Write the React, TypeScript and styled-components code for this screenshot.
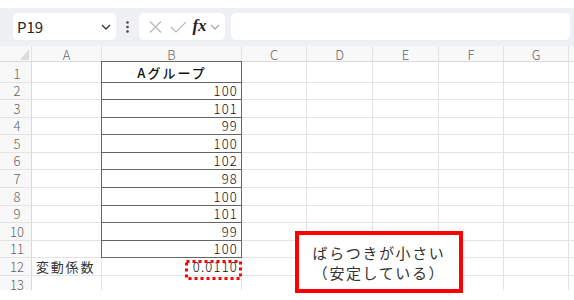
import React from "react";
import styled, { createGlobalStyle, css } from "styled-components";

const Global = createGlobalStyle`
  html, body { margin: 0; padding: 0; background: #ffffff; }
  body { font-family: "Noto Sans CJK JP", "Noto Sans", sans-serif; }
`;

const FONT = `"Noto Sans CJK JP", "Noto Sans", sans-serif`;

const Page = styled.div`
  width: 574px;
  height: 300px;
  overflow: hidden;
  background: #ffffff;
  padding-top: 8px;
  box-sizing: border-box;
`;

const Toolbar = styled.div`
  height: 38px;
  background: #eef0f3;
  display: flex;
  align-items: flex-start;
  padding: 5px 4px 0 13px;
  box-sizing: border-box;
`;

const NameBox = styled.div`
  width: 103px;
  height: 27px;
  background: #ffffff;
  border-radius: 5px;
  display: flex;
  align-items: center;
  justify-content: space-between;
  padding: 0 5px 0 4px;
  box-sizing: border-box;
  font-family: ${FONT};
  font-size: 15px;
  color: #222;
`;

const Dots = styled.div`
  width: 23px;
  height: 27px;
  display: flex;
  align-items: center;
  justify-content: center;
`;

const FxGroup = styled.div`
  width: 86px;
  height: 27px;
  background: #ffffff;
  border-radius: 5px;
  display: flex;
  align-items: center;
  padding: 0 0 0 5px;
  box-sizing: border-box;
`;

const IconSlot = styled.span<{ $w: number }>`
  width: ${(p) => p.$w}px;
  display: flex;
  align-items: center;
  justify-content: center;
`;

const FxText = styled.span`
  font-family: "Liberation Serif", "DejaVu Serif", serif;
  font-style: italic;
  font-weight: bold;
  font-size: 17px;
  color: #222;
  line-height: 1;
  margin-top: -2px;
`;

const FormulaInput = styled.div`
  flex: 1;
  height: 27px;
  margin-left: 6px;
  background: #ffffff;
  border-radius: 5px;
`;

const SheetArea = styled.div`
  position: relative;
`;

const Sheet = styled.div`
  height: 244px;
  overflow: hidden;
  display: grid;
  grid-template-columns: 32px 70px 140px 65px 66px 66px 65px 65px 1fr;
  grid-template-rows: 16px 20.5px repeat(12, 17.6px);
  font-family: ${FONT};
`;

type Kind = "corner" | "colhead" | "rowhead" | "cell";

const Cell = styled.div<{
  $kind: Kind;
  $align?: "left" | "right" | "center";
  $dark?: boolean;
  $top?: boolean;
  $bold?: boolean;
}>`
  position: relative;
  box-sizing: border-box;
  border-right: 1px solid #e3e3e3;
  border-bottom: 1px solid #e3e3e3;
  display: flex;
  align-items: flex-end;
  white-space: nowrap;
  font-size: 13px;
  line-height: 15px;
  color: #222;
  padding: 0 3px 1px 4px;
  justify-content: ${(p) =>
    p.$align === "right" ? "flex-end" : p.$align === "center" ? "center" : "flex-start"};
  ${(p) =>
    (p.$kind === "colhead" || p.$kind === "corner") &&
    css`
      background: #f8f8f8;
      border-bottom-color: #d9d9d9;
      color: #666;
      justify-content: center;
      align-items: center;
      padding: 1px 0 0 0;
      font-size: 13px;
      font-weight: 300;
    `}
  ${(p) =>
    p.$kind === "rowhead" &&
    css`
      background: #f8f8f8;
      border-right-color: #d9d9d9;
      color: #666;
      justify-content: center;
      padding: 0 0 1px 3px;
      font-size: 13px;
      font-weight: 300;
    `}
  ${(p) =>
    p.$dark &&
    css`
      border-right-color: #666;
      border-bottom-color: #666;
      box-shadow: -1px 0 0 #666 ${p.$top ? ", 0 -1px 0 #666, -1px -1px 0 #666" : ""};
    `}
  ${(p) =>
    p.$bold &&
    css`
      font-weight: 500;
      letter-spacing: 2px;
      color: #111;
      padding-bottom: 2px;
    `}
`;

const Num = styled.span`
  letter-spacing: 1.2px;
  font-weight: 300;
  color: #111;
`;

const Label = styled.span`
  letter-spacing: 1.8px;
  color: #333;
`;

const Corner = styled.div`
  position: absolute;
  right: 2px;
  bottom: 1px;
  width: 0;
  height: 0;
  border-left: 9px solid transparent;
  border-bottom: 11px solid #dcdcdc;
`;

const DottedMark = styled.svg`
  position: absolute;
  left: 83px;
  top: 2px;
  width: 57px;
  height: 20px;
  overflow: visible;
`;

const Callout = styled.div`
  position: absolute;
  left: 295px;
  top: 185px;
  width: 168px;
  height: 62px;
  box-sizing: border-box;
  border: 4px solid #ff0000;
  background: #ffffff;
  display: flex;
  flex-direction: column;
  align-items: center;
  justify-content: center;
  font-family: ${FONT};
  font-size: 15px;
  font-weight: 400;
  line-height: 19.5px;
  letter-spacing: 1.6px;
  color: #333;
  padding-top: 1px;
`;

const Chevron = ({ color = "#333" }: { color?: string }) => (
  <svg width="10" height="6" viewBox="0 0 10 6">
    <path d="M1 1 L5 5 L9 1" fill="none" stroke={color} strokeWidth="1.3" />
  </svg>
);

const values = [100, 101, 99, 100, 102, 98, 100, 101, 99, 100];
const cols = ["A", "B", "C", "D", "E", "F", "G", ""];

export default function App() {
  const rows: React.ReactNode[] = [];

  rows.push(
    <Cell key="corner" $kind="corner">
      <Corner />
    </Cell>
  );
  cols.forEach((c, i) => {
    rows.push(
      <Cell key={`h${i}`} $kind="colhead">
        {c}
      </Cell>
    );
  });

  for (let r = 1; r <= 13; r++) {
    rows.push(
      <Cell key={`r${r}`} $kind="rowhead">
        {r}
      </Cell>
    );
    for (let c = 0; c < cols.length; c++) {
      const key = `c${r}-${c}`;
      if (c === 0 && r === 12) {
        rows.push(
          <Cell key={key} $kind="cell">
            <Label>変動係数</Label>
          </Cell>
        );
      } else if (c === 1 && r === 1) {
        rows.push(
          <Cell key={key} $kind="cell" $dark $top $align="center" $bold>
            Aグループ
          </Cell>
        );
      } else if (c === 1 && r >= 2 && r <= 11) {
        rows.push(
          <Cell key={key} $kind="cell" $dark $align="right">
            <Num>{values[r - 2]}</Num>
          </Cell>
        );
      } else if (c === 1 && r === 12) {
        rows.push(
          <Cell key={key} $kind="cell" $align="right">
            <Num>0.0110</Num>
            <DottedMark viewBox="0 0 57 20">
              <rect
                x="1.5"
                y="1.5"
                width="54"
                height="17"
                fill="none"
                stroke="#ff0000"
                strokeWidth="3"
                strokeDasharray="3 3"
              />
            </DottedMark>
          </Cell>
        );
      } else {
        rows.push(<Cell key={key} $kind="cell" />);
      }
    }
  }

  return (
    <>
      <Global />
      <Page>
        <Toolbar>
          <NameBox>
            <span>P19</span>
            <Chevron />
          </NameBox>
          <Dots>
            <svg width="3" height="12" viewBox="0 0 3 12">
              <circle cx="1.5" cy="1.5" r="1.3" fill="#444" />
              <circle cx="1.5" cy="6" r="1.3" fill="#444" />
              <circle cx="1.5" cy="10.5" r="1.3" fill="#444" />
            </svg>
          </Dots>
          <FxGroup>
            <IconSlot $w={22}>
              <svg width="13" height="12" viewBox="0 0 13 12">
                <path d="M1 0.5 L12 11.5 M12 0.5 L1 11.5" stroke="#b8b8b8" strokeWidth="1.2" fill="none" />
              </svg>
            </IconSlot>
            <IconSlot $w={24}>
              <svg width="17" height="12" viewBox="0 0 17 12">
                <path d="M1 6 L6 11 L16 1" stroke="#b8b8b8" strokeWidth="1.2" fill="none" />
              </svg>
            </IconSlot>
            <IconSlot $w={19}>
              <FxText>fx</FxText>
            </IconSlot>
            <IconSlot $w={12}>
              <Chevron color="#aaa" />
            </IconSlot>
          </FxGroup>
          <FormulaInput />
        </Toolbar>
        <SheetArea>
          <Sheet>{rows}</Sheet>
          <Callout>
            <span>ばらつきが小さい</span>
            <span>（安定している）</span>
          </Callout>
        </SheetArea>
      </Page>
    </>
  );
}
